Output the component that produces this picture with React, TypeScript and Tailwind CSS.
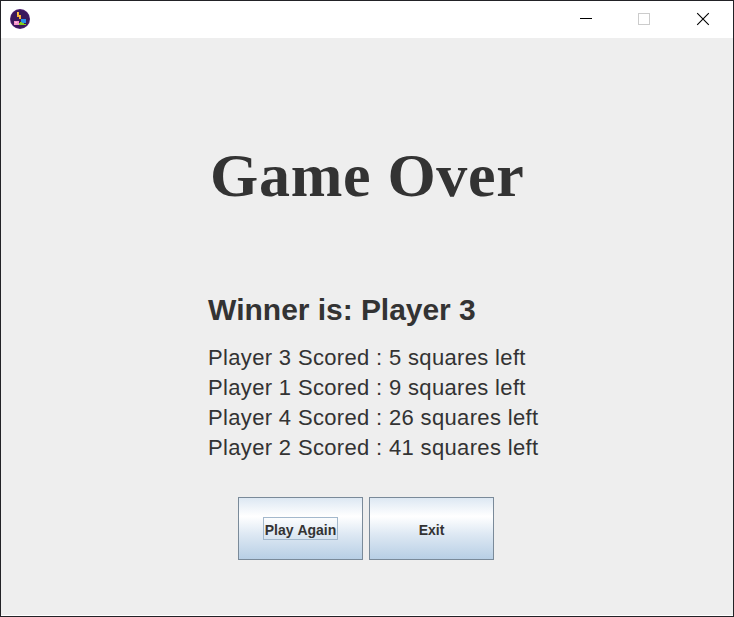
const scores = [
  { player: 3, left: 5 },
  { player: 1, left: 9 },
  { player: 4, left: 26 },
  { player: 2, left: 41 },
];

function GameIcon() {
  return (
    <svg width="20" height="20" viewBox="0 0 20 20">
      <circle cx="10" cy="10" r="10" fill="#4a1d6e" />
      <circle cx="10" cy="10" r="9" fill="#3a185c" />
      <g shapeRendering="crispEdges">
        <path d="M7 3h2v3h2v4H9V8H7z" fill="#fbb034" />
        <path d="M7 3h1v3H7zM9 6h1v2H9z" fill="#ffc94a" />
        <path d="M11 10h5v4h-5z" fill="#278fe8" />
        <path d="M4 12h5v4H4z" fill="#f595cb" />
        <path d="M5 13h2v1H5z" fill="#ffc3e2" />
        <path d="M9 14h1v-1h2v1h2v1h2v1H9z" fill="#85cc1c" />
      </g>
    </svg>
  );
}

function TitleBar() {
  return (
    <div className="flex h-[37px] shrink-0 items-start justify-between bg-white">
      <div className="pl-[9px] pt-2">
        <GameIcon />
      </div>
      <svg width="174" height="37" viewBox="0 0 174 37" fill="none">
        <path d="M21 17.5h12" stroke="#000" shapeRendering="crispEdges" />
        <rect x="79.5" y="12.5" width="11" height="11" stroke="#ccc" />
        <path d="M138.2 12.2l11.6 11.6M149.8 12.2l-11.6 11.6" stroke="#000" strokeWidth="1.1" />
      </svg>
    </div>
  );
}

function MetalButton({ label, focused = false }: { label: string; focused?: boolean }) {
  return (
    <button className="flex h-[63px] w-[125px] items-center justify-center border border-[#7a8a99] bg-[linear-gradient(to_bottom,#dde8f3_0%,#ffffff_30%,#dde8f3_60%,#b8cfe5_100%)] text-[14px] font-bold">
      <span
        className={
          focused
            ? "flex h-[23px] w-[75px] items-center justify-center border border-[#a3b8cc] pt-[3px] whitespace-nowrap"
            : "pt-[3px]"
        }
      >
        {label}
      </span>
    </button>
  );
}

export default function App() {
  return (
    <div className="flex h-[617px] w-[734px] flex-col border border-[#222226] bg-[#eeeeee] font-['Liberation_Sans',Arial,sans-serif] text-[#333333] [font-kerning:none]">
      <TitleBar />
      <main className="flex grow flex-col border-b border-white">
        <h1 className="mt-[102px] ml-[209px] h-[70px] font-['Liberation_Serif',serif] text-[62px] leading-[70px] font-bold tracking-[0.7px] whitespace-nowrap">
          Game Over
        </h1>
        <h2 className="mt-[83px] ml-[207px] text-[30px] leading-[34px] font-bold tracking-[-0.04px]">
          Winner is: Player 3
        </h2>
        <ul className="mt-[16px] ml-[207px] text-[22px] leading-[30px] tracking-[0.34px]">
          {scores.map((s) => (
            <li key={s.player}>{`Player ${s.player} Scored : ${s.left} squares left`}</li>
          ))}
        </ul>
        <div className="mt-[34px] ml-[237px] flex gap-[6px]">
          <MetalButton label="Play Again" focused />
          <MetalButton label="Exit" />
        </div>
      </main>
    </div>
  );
}
